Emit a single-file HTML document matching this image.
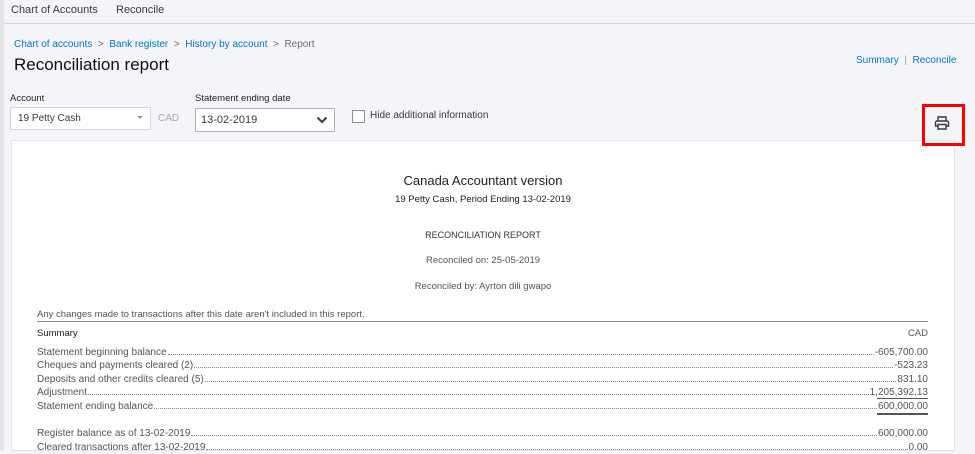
<!DOCTYPE html>
<html><head><meta charset="utf-8"><style>
*{margin:0;padding:0;box-sizing:border-box}
body{width:975px;height:451px;overflow:hidden;background:#f4f5f8;font-family:"Liberation Sans",Arial,sans-serif;position:relative;color:#393a3d}
.a{position:absolute;white-space:nowrap}
.lb{position:absolute;left:0;top:0;width:4px;height:451px;background:#e3e4e7}
.nav{position:absolute;left:4px;top:0;width:971px;height:24px;border-bottom:1px solid #d4d7dc;background:#f4f5f8}
.bc{color:#0077c5;font-size:10px}
.row{position:absolute;left:37px;width:891px;font-size:10px;color:#555;display:flex;align-items:baseline;height:13px}
.row .l{white-space:nowrap}
.row .d{flex:1;border-bottom:1px dotted #888;margin:0 1px;height:9px}
.row .v{white-space:nowrap}
</style></head><body>
<div class="lb"></div>
<div class="nav"></div>
<div class="a" style="left:11px;top:4px;font-size:11px;color:#393a3d">Chart of Accounts</div>
<div class="a" style="left:116px;top:4px;font-size:11px;color:#393a3d">Reconcile</div>
<div class="a bc" style="left:14px;top:39px">Chart of accounts <span style="color:#6b6c72">&nbsp;&gt;&nbsp;</span> Bank register <span style="color:#6b6c72">&nbsp;&gt;&nbsp;</span> History by account <span style="color:#6b6c72">&nbsp;&gt;&nbsp;</span> <span style="color:#6b6c72">Report</span></div>
<div class="a" style="left:14px;top:55px;font-size:17px;color:#111">Reconciliation report</div>
<div class="a bc" style="left:856px;top:55px">Summary <span style="color:#999">&nbsp;|&nbsp;</span> Reconcile</div>
<div class="a" style="left:10px;top:93px;font-size:9.5px;color:#222">Account</div>
<div class="a" style="left:10px;top:107px;width:141px;height:23px;background:#fff;border:1px solid #d4d7dc"></div>
<div class="a" style="left:18px;top:113px;font-size:10px;color:#393a3d">19 Petty Cash</div>
<div class="a" style="left:137px;top:116px;width:0;height:0;border-left:3px solid transparent;border-right:3px solid transparent;border-top:3px solid #999"></div>
<div class="a" style="left:158px;top:113px;font-size:10px;color:#aaa">CAD</div>
<div class="a" style="left:195px;top:93px;font-size:9.5px;color:#222">Statement ending date</div>
<div class="a" style="left:195px;top:108px;width:140px;height:24px;background:#fff;border:1px solid #b0b3b8;border-radius:2px"></div>
<div class="a" style="left:201px;top:114px;font-size:11px;color:#393a3d">13-02-2019</div>
<svg class="a" style="left:316px;top:116px" width="12" height="8" viewBox="0 0 12 8"><path d="M1.5 1.5 L6 6 L10.5 1.5" fill="none" stroke="#393a3d" stroke-width="2"/></svg>
<div class="a" style="left:352px;top:110px;width:13px;height:13px;background:#fff;border:1px solid #8d9096"></div>
<div class="a" style="left:370px;top:110px;font-size:10px;color:#393a3d">Hide additional information</div>
<div class="a" style="left:11px;top:140px;width:944px;height:311px;background:#fff;border:1px solid #e3e5e8"></div>
<div class="a" style="left:922px;top:104px;width:43px;height:42px;border:3px solid #f00"></div>
<svg class="a" style="left:934px;top:115px" width="16" height="16" viewBox="0 0 16 16"><path d="M4 6V2h8v4M3 6h10a1.5 1.5 0 0 1 1.5 1.5V11H12M4 11H1.5V7.5A1.5 1.5 0 0 1 3 6M4 9.5h8V14H4z" fill="none" stroke="#393a3d" stroke-width="1.4"/></svg>
<div class="a" style="left:11px;top:173px;width:944px;text-align:center;font-size:13px;color:#222">Canada Accountant version</div>
<div class="a" style="left:11px;top:194px;width:944px;text-align:center;font-size:9.5px;color:#222">19 Petty Cash, Period Ending 13-02-2019</div>
<div class="a" style="left:11px;top:230px;width:944px;text-align:center;font-size:9px;color:#333">RECONCILIATION REPORT</div>
<div class="a" style="left:11px;top:255px;width:944px;text-align:center;font-size:9.5px;color:#555">Reconciled on: 25-05-2019</div>
<div class="a" style="left:11px;top:281px;width:944px;text-align:center;font-size:9.5px;color:#555">Reconciled by: Ayrton dili gwapo</div>
<div class="a" style="left:37px;top:309px;font-size:9.5px;color:#555">Any changes made to transactions after this date aren't included in this report.</div>
<div class="a" style="left:37px;top:321px;width:891px;height:1px;background:#888"></div>
<div class="a" style="left:37px;top:328px;font-size:9.5px;color:#222">Summary</div>
<div class="a" style="left:828px;top:328px;width:100px;text-align:right;font-size:9.5px;color:#555">CAD</div>
<div class="row" style="top:346px"><span class="l">Statement beginning balance</span><span class="d"></span><span class="v">-605,700.00</span></div>
<div class="row" style="top:359px"><span class="l">Cheques and payments cleared (2)</span><span class="d"></span><span class="v">-523.23</span></div>
<div class="row" style="top:373px"><span class="l">Deposits and other credits cleared (5)</span><span class="d"></span><span class="v">831.10</span></div>
<div class="row" style="top:386px"><span class="l">Adjustment</span><span class="d"></span><span class="v">1,205,392.13</span></div>
<div class="a" style="left:877px;top:398px;width:51px;height:1px;background:#555"></div>
<div class="row" style="top:400px"><span class="l">Statement ending balance</span><span class="d"></span><span class="v">600,000.00</span></div>
<div class="a" style="left:877px;top:413px;width:51px;height:2px;background:#555"></div>
<div class="row" style="top:427px"><span class="l">Register balance as of 13-02-2019</span><span class="d"></span><span class="v">600,000.00</span></div>
<div class="row" style="top:441px"><span class="l">Cleared transactions after 13-02-2019</span><span class="d"></span><span class="v">0.00</span></div>
</body></html>
